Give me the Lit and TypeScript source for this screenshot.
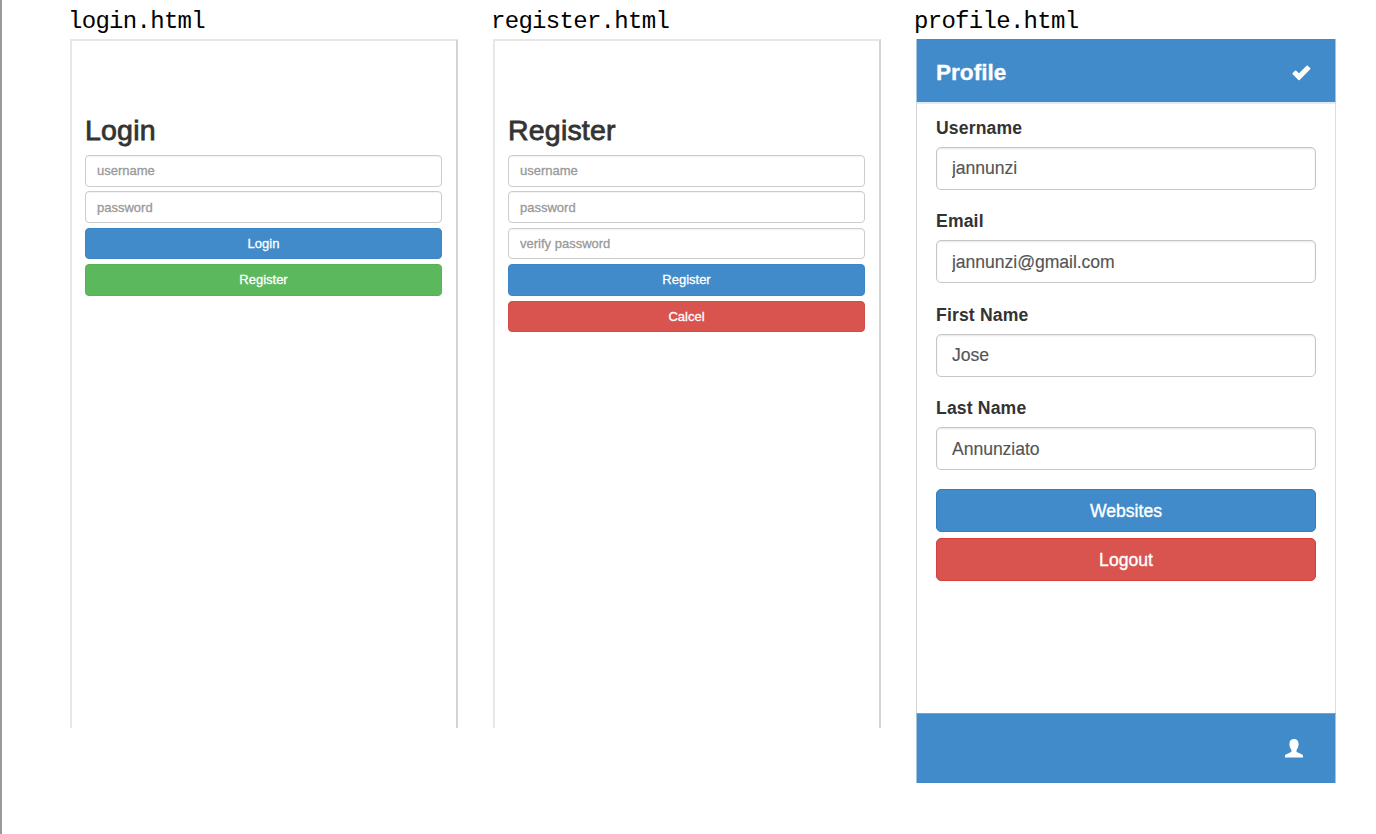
import { LitElement, html, css } from "lit";
import { customElement, property } from "lit/decorators.js";

interface Action {
  label: string;
  tone: "primary" | "success" | "danger";
}

@customElement("auth-screen")
class AuthScreen extends LitElement {
  @property() heading = "";
  @property({ attribute: false }) fields: string[] = [];
  @property({ attribute: false }) actions: Action[] = [];

  static styles = css`
    :host {
      display: block;
      box-sizing: border-box;
      width: 388px;
      height: 689px;
      padding: 70px 14px 0 13px;
      border: 2px solid #e7e7e7;
      border-right-color: #d4d4d4;
      border-bottom: 0;
      font: 13px "Liberation Sans", Arial, sans-serif;
    }
    .heading {
      margin: 0;
      padding-bottom: 6px;
      height: 38px;
      font-size: 28.5px;
      font-weight: 400;
      line-height: 38px;
      letter-spacing: 0.2px;
      color: #333;
      -webkit-text-stroke: 0.8px #333;
    }
    .stack {
      display: flex;
      flex-direction: column;
      gap: 4.7px;
    }
    .field,
    .button {
      box-sizing: border-box;
      display: block;
      width: 100%;
      height: 31.7px;
      margin: 0;
      border-radius: 4px;
      font: inherit;
    }
    .field {
      padding: 0 11px;
      border: 1px solid #ccc;
      background: #fff;
      box-shadow: inset 0 1px 1px rgba(0, 0, 0, 0.05);
    }
    .field::placeholder {
      color: #999;
      -webkit-text-stroke: 0.3px #999;
    }
    .button {
      padding: 0;
      border: 1px solid;
      color: #fff;
      -webkit-text-stroke: 0.3px #fff;
    }
    .primary {
      background: #428bca;
      border-color: #3d86c6;
    }
    .success {
      background: #5cb85c;
      border-color: #55b256;
    }
    .danger {
      background: #d9534f;
      border-color: #d44c48;
    }
  `;

  render() {
    return html`
      <h1 class="heading">${this.heading}</h1>
      <div class="stack">
        ${this.fields.map((f) => html`<input class="field" placeholder=${f} />`)}
        ${this.actions.map((a) => html`<button class="button ${a.tone}">${a.label}</button>`)}
      </div>
    `;
  }
}

@customElement("profile-screen")
class ProfileScreen extends LitElement {
  static styles = css`
    :host {
      display: flex;
      flex-direction: column;
      box-sizing: border-box;
      width: 420px;
      height: 744px;
      font: 17.6px "Liberation Sans", Arial, sans-serif;
    }
    .bar {
      box-sizing: border-box;
      display: flex;
      align-items: center;
      background: #428bca;
      border-left: 1px solid #a5c4e0;
      border-right: 1px solid #a5c4e0;
    }
    .top {
      height: 65px;
      justify-content: space-between;
      padding: 4px 24px 0 19px;
      border-bottom: 2px solid #deebf5;
    }
    .bottom {
      height: 70px;
      justify-content: flex-end;
      padding-right: 32px;
      border-top: 1px solid #73a2cc;
    }
    .title {
      margin: 0;
      font-size: 22.6px;
      font-weight: 700;
      color: #fff;
      -webkit-text-stroke: 0.3px #fff;
    }
    .icon {
      display: block;
      fill: #fff;
    }
    .body {
      flex: 1;
      padding: 10.5px 19px 0;
      border-left: 1px solid #d5d5d5;
      border-right: 1px solid #ddd;
    }
    .group {
      height: 93.6px;
    }
    .group:last-of-type {
      height: 94px;
    }
    .label {
      display: block;
      height: 32.2px;
      line-height: 27px;
      font-weight: 700;
      letter-spacing: 0.15px;
      color: #333;
    }
    .field,
    .button {
      box-sizing: border-box;
      display: block;
      width: 100%;
      height: 43px;
      margin: 0;
      border-radius: 5px;
      font: inherit;
    }
    .field {
      padding: 1px 15px 0;
      border: 1px solid #c6c6c6;
      background: #fff;
      color: #555;
      letter-spacing: -0.05px;
      box-shadow: inset 0 1px 2px rgba(0, 0, 0, 0.1);
      -webkit-text-stroke: 0.15px #555;
    }
    .actions {
      display: flex;
      flex-direction: column;
      gap: 6.5px;
    }
    .button {
      padding: 2px 0 0;
      border: 1px solid;
      color: #fff;
      -webkit-text-stroke: 0.35px #fff;
    }
    .primary {
      background: #428bca;
      border-color: #357ebd;
    }
    .danger {
      background: #d9534f;
      border-color: #d43f3a;
    }
  `;

  private fields = [
    ["Username", "jannunzi"],
    ["Email", "jannunzi@gmail.com"],
    ["First Name", "Jose"],
    ["Last Name", "Annunziato"],
  ];

  render() {
    return html`
      <header class="bar top">
        <h1 class="title">Profile</h1>
        <svg class="icon" width="19" height="16" viewBox="0 0 19 16">
          <path d="M.7 8.100 3 5.700q.6-.6 1.200 0L7 8.300 14.600.700q.6-.6 1.200 0L18.200 3.100q.6.600 0 1.200L7.600 14.900q-.6.600-1.200 0L.7 9.300q-.6-.6 0-1.200z" />
        </svg>
      </header>
      <main class="body">
        ${this.fields.map(
          ([label, value]) => html`
            <div class="group">
              <label class="label">${label}</label>
              <input class="field" .value=${value} />
            </div>
          `
        )}
        <div class="actions">
          <button class="button primary">Websites</button>
          <button class="button danger">Logout</button>
        </div>
      </main>
      <footer class="bar bottom">
        <svg class="icon" width="18" height="19" viewBox="0 0 18 19">
          <path d="M9 0C6.200 0 4.400 1.800 4.400 5c0 1 .1 1.600.3 2.300.2 1.400 1 2.600 1.700 3.600.3.900.2 1.600-.4 2.200C4.500 14.200.5 15.200 0 16.600V18.500h18v-1.900c-.5-1.400-4.500-2.400-6-3.500-.6-.6-.7-1.300-.4-2.200.7-1 1.500-2.200 1.700-3.600.2-.7.3-1.300.3-2.300C13.600 1.800 11.800 0 9 0z" />
        </svg>
      </footer>
    `;
  }
}

@customElement("app-root")
class AppRoot extends LitElement {
  static styles = css`
    :host {
      display: flex;
      align-items: flex-start;
      box-sizing: border-box;
      width: 1376px;
      height: 834px;
      padding-left: 68px;
      border-left: 2px solid #999;
      background: #fff;
      overflow: hidden;
    }
    .column {
      flex: none;
      margin-right: 35px;
    }
    .caption {
      height: 39px;
      margin-left: -2px;
      font: 24px/44px "Liberation Mono", monospace;
      letter-spacing: -0.7px;
      color: #000;
      white-space: pre;
    }
  `;

  render() {
    return html`
      <section class="column">
        <div class="caption">login.html</div>
        <auth-screen
          heading="Login"
          .fields=${["username", "password"]}
          .actions=${[
            { label: "Login", tone: "primary" },
            { label: "Register", tone: "success" },
          ]}
        ></auth-screen>
      </section>
      <section class="column">
        <div class="caption">register.html</div>
        <auth-screen
          heading="Register"
          .fields=${["username", "password", "verify password"]}
          .actions=${[
            { label: "Register", tone: "primary" },
            { label: "Calcel", tone: "danger" },
          ]}
        ></auth-screen>
      </section>
      <section class="column">
        <div class="caption">profile.html</div>
        <profile-screen></profile-screen>
      </section>
    `;
  }
}
